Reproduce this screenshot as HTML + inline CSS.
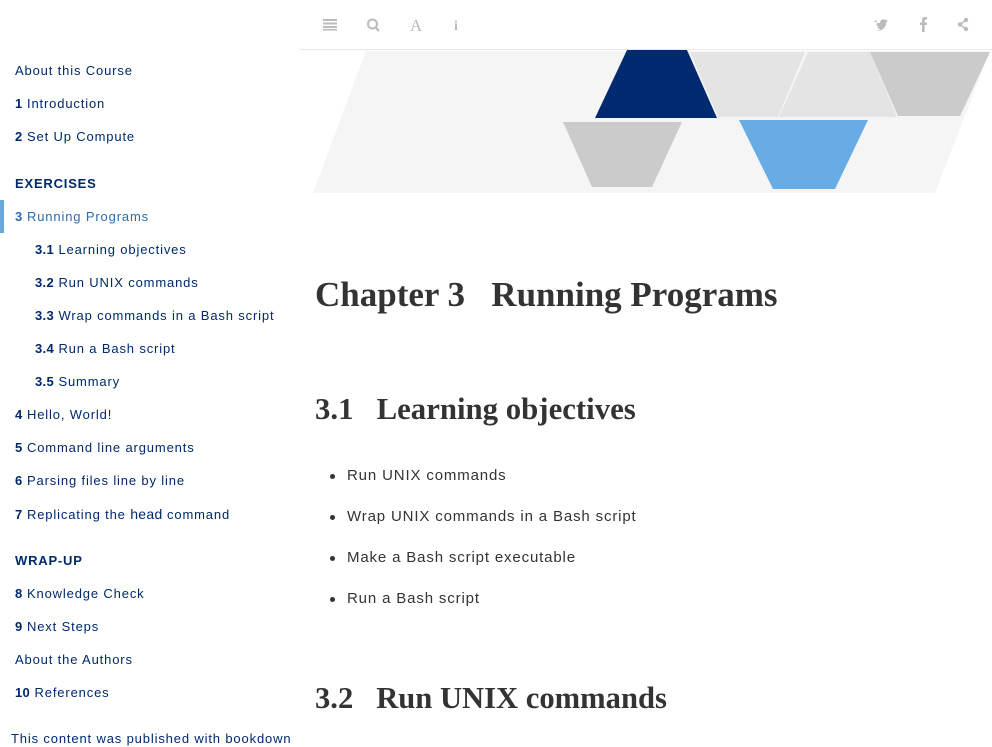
<!DOCTYPE html>
<html><head><meta charset="utf-8"><style>
*{margin:0;padding:0;box-sizing:border-box}
body{width:992px;height:744px;overflow:hidden;background:#fff;font-family:"Liberation Sans",sans-serif;position:relative}
.sb a{position:absolute;font-size:13px;color:#00296b;letter-spacing:0.85px;white-space:nowrap;line-height:16px}
.sb b{font-weight:bold;letter-spacing:0.3px}
.sb .h{font-weight:bold;letter-spacing:0.8px}
.sb .act{color:#2e6ca8}
.hdr{position:absolute;left:300px;top:0;width:692px;height:50px;border-bottom:1px solid #e8e8e8}
.ser{font-family:"Liberation Serif",serif;font-weight:bold;color:#333;position:absolute;white-space:nowrap}
ul{position:absolute;left:347px;top:467px;list-style:none}
li{font-size:15px;color:#333;height:41px;line-height:18px;position:relative;letter-spacing:0.85px}
li:before{content:"";position:absolute;left:-17px;top:7px;width:5px;height:5px;border-radius:50%;background:#333}
</style></head><body>
<div class="sb">
<a style="left:15px;top:63px">About this Course</a>
<a style="left:15px;top:96px"><b>1</b> Introduction</a>
<a style="left:15px;top:129px"><b>2</b> Set Up Compute</a>
<a class="h" style="left:15px;top:176px">EXERCISES</a>
<div style="position:absolute;left:0;top:200px;width:4px;height:33px;background:#66a9df"></div>
<a class="act" style="left:15px;top:209px"><b>3</b> Running Programs</a>
<a style="left:35px;top:242px"><b>3.1</b> Learning objectives</a>
<a style="left:35px;top:275px"><b>3.2</b> Run UNIX commands</a>
<a style="left:35px;top:308px"><b>3.3</b> Wrap commands in a Bash script</a>
<a style="left:35px;top:341px"><b>3.4</b> Run a Bash script</a>
<a style="left:35px;top:374px"><b>3.5</b> Summary</a>
<a style="left:15px;top:407px"><b>4</b> Hello, World!</a>
<a style="left:15px;top:440px"><b>5</b> Command line arguments</a>
<a style="left:15px;top:473px"><b>6</b> Parsing files line by line</a>
<a style="left:15px;top:506px"><b>7</b> Replicating the <span style="font-size:14px;letter-spacing:0.3px">head</span> command</a>
<a class="h" style="left:15px;top:553px">WRAP-UP</a>
<a style="left:15px;top:586px"><b>8</b> Knowledge Check</a>
<a style="left:15px;top:619px"><b>9</b> Next Steps</a>
<a style="left:15px;top:652px">About the Authors</a>
<a style="left:15px;top:685px"><b>10</b> References</a>
<a style="left:11px;top:731px">This content was published with bookdown</a>
</div>
<div class="hdr"></div>
<svg style="position:absolute;left:0;top:0" width="992" height="744">
<g fill="#bbb">
<rect x="323" y="19" width="14" height="2"/><rect x="323" y="22.5" width="14" height="2"/><rect x="323" y="26" width="14" height="2"/><rect x="323" y="29" width="14" height="1.5"/>
<circle cx="372.5" cy="24" r="4.5" fill="none" stroke="#bbb" stroke-width="2"/><path d="M375 27l4 4" stroke="#bbb" stroke-width="2.2"/>
<text x="416" y="31" font-family="Liberation Serif" font-size="17" text-anchor="middle">A</text>
<text x="456" y="30" font-family="Liberation Serif" font-weight="bold" font-size="14" text-anchor="middle">i</text>
<path d="M874 21c2 1.5 4 2 6 2 0-3 3-4.5 5-3 1 0 2-.5 2.5-1-.3 1-.8 1.5-1.5 2 .7 0 1.4-.2 2-.5-.5.8-1 1.3-1.7 1.7 0 5-4 9-10 8.5 1.5-.2 3-.8 4-1.7-1.5 0-2.6-1-3-2.2.5 0 1 0 1.5-.1-1.6-.5-2.6-1.8-2.6-3.3.5.2 1 .4 1.6.4-1.5-1-2-3-1-4z"/>
<path d="M922 32v-7h-2v-2.5h2V20c0-2 1-3 3-3h2v2.5h-1.3c-.8 0-1 .4-1 1v2h2.3l-.3 2.5h-2V32z"/>
<circle cx="966" cy="20" r="2.2"/><circle cx="960" cy="24.5" r="2.2"/><circle cx="966" cy="29" r="2.2"/><path d="M966 20l-6 4.5 6 4.5" stroke="#bbb" stroke-width="1.5" fill="none"/>
</g>
<polygon points="366,51 990,51 935,193 313,193" fill="#f5f5f5"/>
<polygon points="627,50 687,50 717,118 595,118" fill="#002a70"/>
<polygon points="690,52 805,52 778,117 718,117" fill="#e4e4e4"/>
<polygon points="808,52 870,52 897,117 779,117" fill="#e4e4e4"/>
<polygon points="870,52 990,52 960,116 898,116" fill="#cbcbcb"/>
<polygon points="563,122 682,122 652,187 592,187" fill="#cbcbcb"/>
<polygon points="739,120 868,120 835,189 773,189" fill="#67ace4"/>
</svg>
<div class="ser" style="left:315px;top:275px;font-size:35px">Chapter 3&nbsp;&nbsp; Running Programs</div>
<div class="ser" style="left:315px;top:392px;font-size:30.8px">3.1&nbsp;&nbsp; Learning objectives</div>
<ul>
<li>Run UNIX commands</li>
<li>Wrap UNIX commands in a Bash script</li>
<li>Make a Bash script executable</li>
<li>Run a Bash script</li>
</ul>
<div class="ser" style="left:315px;top:681px;font-size:30.6px">3.2&nbsp;&nbsp; Run UNIX commands</div>
</body></html>
